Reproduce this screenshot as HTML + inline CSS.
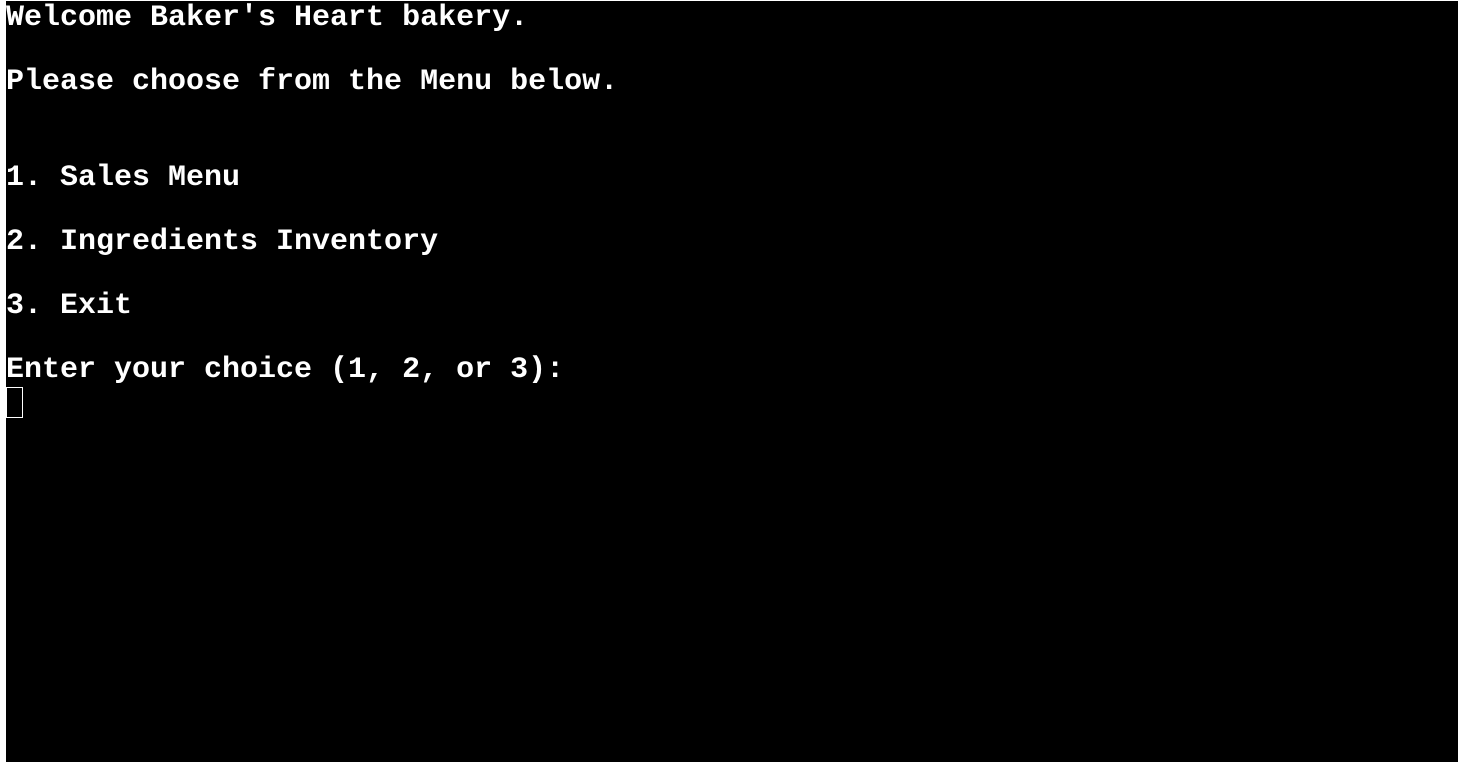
<!DOCTYPE html>
<html><head><style>
html,body{margin:0;padding:0;background:#fff;width:1458px;height:762px;overflow:hidden}
#t{position:absolute;left:6px;top:1px;width:1452px;height:761px;background:#000;}
#x{position:absolute;left:0;top:1px;color:#fff;
font-family:"Liberation Mono",monospace;font-weight:bold;font-size:30px;line-height:32px;white-space:pre;}
.c{display:inline-block;width:15px;height:29px;border:1px solid #fff;vertical-align:top;margin-top:1px}
</style></head><body>
<div id="t"><div id="x">Welcome Baker's Heart bakery.

Please choose from the Menu below.


1. Sales Menu

2. Ingredients Inventory

3. Exit

Enter your choice (1, 2, or 3):
<span class="c"></span></div></div>
</body></html>
